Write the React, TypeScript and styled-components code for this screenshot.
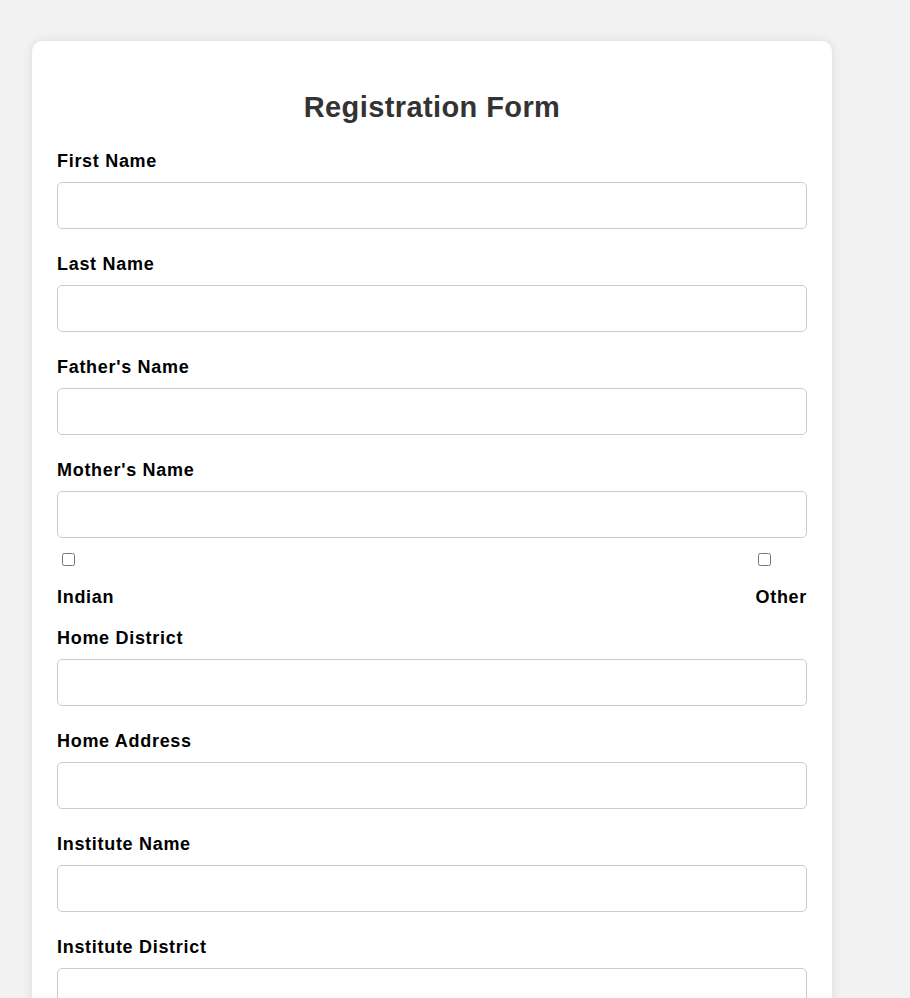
import React from "react";
import styled, { createGlobalStyle } from "styled-components";

const GlobalStyle = createGlobalStyle`
  html, body {
    margin: 0;
    padding: 0;
    background: #f2f2f2;
    font-family: "Liberation Sans", Arial, sans-serif;
  }
`;

const Page = styled.div`
  padding: 41px 78px 40px 32px;
`;

const Card = styled.form`
  width: 800px;
  box-sizing: border-box;
  background: #ffffff;
  border-radius: 10px;
  box-shadow: 0 0 10px rgba(0, 0, 0, 0.1);
  padding: 21px 25px 25px;
`;

const Title = styled.h2`
  margin: 28px 0 26px;
  text-align: center;
  font-size: 29px;
  line-height: 34px;
  font-weight: bold;
  letter-spacing: 0.4px;
  color: #333333;
`;

const Group = styled.div`
  display: flex;
  flex-direction: column;
  margin-bottom: 24px;
`;

const Label = styled.label`
  display: block;
  font-size: 18px;
  line-height: 22px;
  font-weight: bold;
  letter-spacing: 0.7px;
  color: #000000;
  margin-bottom: 10px;
`;

const TextInput = styled.input`
  box-sizing: border-box;
  width: 100%;
  height: 47px;
  padding: 12px;
  border: 1px solid #cccccc;
  border-radius: 5px;
  font-size: 16px;
  font-family: inherit;
  background: #ffffff;
  outline: none;
`;

const CheckRow = styled.div`
  display: flex;
  justify-content: space-between;
  margin-top: -12px;
  margin-bottom: 19px;
`;

const CheckOption = styled.div`
  display: flex;
  flex-direction: column;
  align-items: flex-start;
`;

const Checkbox = styled.input<{ $inset: number }>`
  width: 13px;
  height: 13px;
  margin: 3px 3px 3px ${(p) => p.$inset}px;
`;

const CheckLabel = styled.label`
  display: block;
  font-size: 18px;
  line-height: 22px;
  font-weight: bold;
  letter-spacing: 0.7px;
  color: #000000;
  margin-top: 17px;
`;

const before = ["First Name", "Last Name", "Father's Name", "Mother's Name"];
const after = [
  "Home District",
  "Home Address",
  "Institute Name",
  "Institute District",
];

function Field({ label }: { label: string }) {
  const id = label.replace(/[^a-z]/gi, "").toLowerCase();
  return (
    <Group>
      <Label htmlFor={id}>{label}</Label>
      <TextInput id={id} type="text" />
    </Group>
  );
}

export default function App() {
  return (
    <>
      <GlobalStyle />
      <Page>
        <Card onSubmit={(e) => e.preventDefault()}>
          <Title>Registration Form</Title>
          {before.map((l) => (
            <Field key={l} label={l} />
          ))}
          <CheckRow>
            <CheckOption>
              <Checkbox type="checkbox" id="indian" $inset={5} />
              <CheckLabel htmlFor="indian">Indian</CheckLabel>
            </CheckOption>
            <CheckOption>
              <Checkbox type="checkbox" id="other" $inset={3} />
              <CheckLabel htmlFor="other">Other</CheckLabel>
            </CheckOption>
          </CheckRow>
          {after.map((l) => (
            <Field key={l} label={l} />
          ))}
        </Card>
      </Page>
    </>
  );
}
